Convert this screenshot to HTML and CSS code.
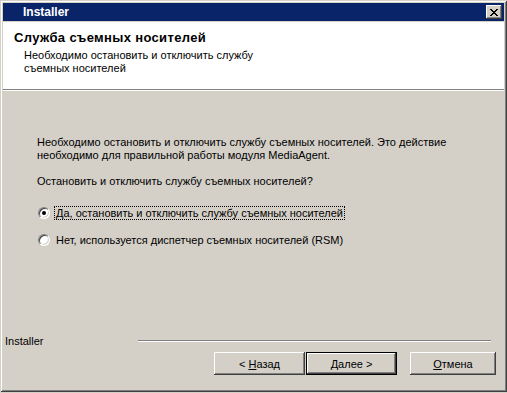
FILE: index.html
```html
<!DOCTYPE html>
<html lang="ru">
<head>
    <meta charset="UTF-8">
    <title>Installer</title>
    <link rel="stylesheet" href="styles.css">
</head>
<body>
    <div class="window">
        <div class="titlebar">
            <span class="title">Installer</span>
            <button class="close-btn" aria-label="Закрыть">
                <svg width="8" height="7" viewBox="0 0 8 7" shape-rendering="crispEdges">
                    <path d="M0 0h2v1h-2zM6 0h2v1h-2zM1 1h2v1h-2zM5 1h2v1h-2zM2 2h4v1h-4zM3 3h2v1h-2zM2 4h4v1h-4zM1 5h2v1h-2zM5 5h2v1h-2zM0 6h2v1h-2zM6 6h2v1h-2z" fill="#000"/>
                </svg>
            </button>
        </div>

        <div class="header">
            <div class="header-title">Служба съемных носителей</div>
            <div class="header-sub">Необходимо остановить и отключить службу<br>съемных носителей</div>
        </div>

        <div class="content">
            <p>Необходимо остановить и отключить службу съемных носителей. Это действие<br>необходимо для правильной работы модуля MediaAgent.</p>
            <p>Остановить и отключить службу съемных носителей?</p>

            <div class="options">
                <label class="radio">
                    <input type="radio" name="rsm" checked>
                    <span class="radio-mark"></span>
                    <span class="radio-text focused">Да, остановить и отключить службу съемных носителей</span>
                </label>
                <label class="radio">
                    <input type="radio" name="rsm">
                    <span class="radio-mark"></span>
                    <span class="radio-text">Нет, используется диспетчер съемных носителей (RSM)</span>
                </label>
            </div>
        </div>

        <div class="footer">
            <div class="brand-row">
                <span class="brand">Installer</span>
                <span class="etched"></span>
            </div>
            <div class="buttons">
                <button class="btn"><span>&lt; <u>Н</u>азад</span></button>
                <button class="btn btn-default"><span><u>Д</u>алее &gt;</span></button>
                <button class="btn btn-cancel"><span><u>О</u>тмена</span></button>
            </div>
        </div>
    </div>
</body>
</html>
```

FILE: styles.css
```css
/* Classic dialog look */
* {
    margin: 0;
    padding: 0;
    box-sizing: border-box;
}

body {
    background-color: #d4d0c8;
    font-family: 'Liberation Sans', Arial, sans-serif;
    font-size: 11px;
    color: #000;
}

.window {
    width: 507px;
    height: 392px;
    padding: 3px;
    background-color: #d4d0c8;
    display: flex;
    flex-direction: column;
    box-shadow: inset 1px 1px #d4d0c8, inset -1px -1px #404040,
                inset 2px 2px #ffffff, inset -2px -2px #808080;
}

.titlebar {
    height: 18px;
    background-color: #0a246a;
    display: flex;
    align-items: center;
    justify-content: space-between;
    padding: 0 2px 0 20px;
}

.title {
    color: #fff;
    font-weight: bold;
    font-size: 12px;
}

.close-btn {
    width: 16px;
    height: 14px;
    background-color: #d4d0c8;
    border: none;
    display: flex;
    align-items: center;
    justify-content: center;
    box-shadow: inset -1px -1px #404040, inset 1px 1px #ffffff,
                inset -2px -2px #808080, inset 2px 2px #d4d0c8;
}

.header {
    margin-top: 1px;
    height: 68px;
    background-color: #fff;
    padding: 8px 0 0 11px;
    border-bottom: 1px solid #808080;
    box-shadow: 0 1px #fff;
}

.header-title {
    font-weight: bold;
    font-size: 13px;
    line-height: 16px;
    letter-spacing: 0.35px;
}

.header-sub {
    padding: 3px 0 0 10px;
    line-height: 13px;
}

.content {
    flex: 1;
    padding: 46px 0 0 34px;
    line-height: 13px;
}

.content p {
    margin-bottom: 13px;
}

.options {
    display: flex;
    flex-direction: column;
    gap: 13px;
    margin-top: 18px;
}

.radio {
    display: flex;
    align-items: center;
    height: 14px;
}

.radio input {
    display: none;
}

.radio-mark {
    width: 12px;
    height: 12px;
    border-radius: 50%;
    background-color: #fff;
    border: 1px solid;
    border-color: #808080 #ffffff #ffffff #808080;
    box-shadow: inset 1px 1px #404040, inset -1px -1px #d4d0c8;
    margin-left: 1px;
    display: flex;
    align-items: center;
    justify-content: center;
}

.radio input:checked + .radio-mark::after {
    content: "";
    width: 4px;
    height: 4px;
    border-radius: 50%;
    background-color: #000;
}

.radio-text {
    margin-left: 4px;
    padding: 0 1px;
    line-height: 12px;
    border: 1px solid transparent;
}

.radio-text.focused {
    border: 1px dotted #000;
}

.footer {
    padding: 0 0 0 2px;
}

.brand-row {
    display: flex;
    align-items: center;
    height: 13px;
}

.brand {
    width: 133px;
    color: #000;
}

.etched {
    width: 353px;
    height: 2px;
    border-top: 1px solid #808080;
    border-bottom: 1px solid #ffffff;
}

.buttons {
    display: flex;
    justify-content: flex-end;
    padding: 5px 8px 14px 0;
}

.btn {
    width: 91px;
    height: 23px;
    background-color: #d4d0c8;
    border: none;
    font-family: inherit;
    font-size: 11px;
    color: #000;
    box-shadow: inset -1px -1px #404040, inset 1px 1px #ffffff,
                inset -2px -2px #808080, inset 2px 2px #d4d0c8;
}

.btn-default {
    margin-left: 1px;
    box-shadow: inset 0 0 0 1px #000, inset -2px -2px #404040, inset 2px 2px #ffffff,
                inset -3px -3px #808080;
}

.btn-cancel {
    width: 86px;
    margin-left: 13px;
}
```
